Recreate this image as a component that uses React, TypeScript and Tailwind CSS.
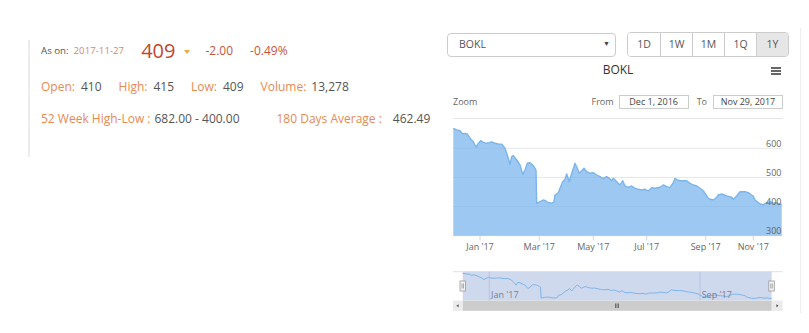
import React from "react";

// price series traced from the chart, in 3x crop units (origin 440,110)
const trace: [number, number][] = [
  [40, 55], [50, 60], [60, 62], [68, 72], [75, 70], [82, 72], [90, 85], [100, 95], [108, 112],
  [115, 100], [122, 92], [130, 97], [140, 100], [148, 98], [155, 96], [165, 100], [175, 102],
  [185, 103], [195, 115], [200, 130], [205, 145], [210, 163], [215, 140], [220, 137], [230, 150],
  [240, 165], [248, 193], [255, 180], [262, 160], [270, 158], [278, 165], [285, 175], [288, 180],
  [290, 280], [300, 275], [310, 270], [318, 273], [325, 278], [335, 280], [342, 275], [345, 255],
  [355, 248], [360, 235], [368, 215], [375, 208], [380, 192], [388, 215], [395, 190], [405, 160],
  [412, 175], [418, 190], [425, 182], [432, 175], [440, 185], [450, 190], [460, 188], [470, 195],
  [480, 200], [490, 206], [500, 200], [508, 205], [515, 212], [520, 205], [530, 215], [540, 225],
  [548, 212], [555, 228], [565, 232], [575, 228], [585, 235], [595, 238], [605, 240], [615, 238],
  [625, 243], [635, 233], [645, 235], [660, 232], [670, 225], [680, 230], [690, 233], [700, 218],
  [705, 205], [712, 210], [720, 212], [730, 212], [740, 212], [750, 220], [760, 225], [770, 228],
  [780, 235], [790, 242], [800, 258], [805, 265], [812, 268], [820, 270], [830, 262], [835, 255],
  [845, 252], [860, 258], [875, 262], [880, 268], [890, 258], [900, 245], [915, 245], [925, 248],
  [935, 255], [940, 258], [945, 270], [952, 275], [960, 282], [970, 284], [980, 278], [990, 275],
  [1000, 280], [1010, 278], [1020, 283], [1025, 283],
];

const mainPts = trace.map(([x, y]) => [440 + x / 3, 110 + y / 3] as const);
const navPts = trace.map(([x, y]) => [
  440 + (68 + ((x - 40) * 927) / 985) / 3,
  250 + (70 + (y - 55) * 0.33) / 3,
] as const);

const toLine = (pts: readonly (readonly [number, number])[]) =>
  pts.map(([x, y], i) => `${i ? "L" : "M"}${x.toFixed(1)},${y.toFixed(1)}`).join(" ");

const PLOT_BOTTOM = 235.7;
const areaPath = `${toLine(mainPts)} L${mainPts[mainPts.length - 1][0].toFixed(1)},${PLOT_BOTTOM} L${mainPts[0][0].toFixed(1)},${PLOT_BOTTOM} Z`;

const grid = [
  { v: "600", y: 148.3 },
  { v: "500", y: 177.4 },
  { v: "400", y: 206.6 },
  { v: "300", y: PLOT_BOTTOM },
];

const ticks = [
  { l: "Jan '17", x: 480 },
  { l: "Mar '17", x: 539.3 },
  { l: "May '17", x: 593.3 },
  { l: "Jul '17", x: 646.7 },
  { l: "Sep '17", x: 705.7 },
  { l: "Nov '17", x: 753.3 },
];

const ranges = ["1D", "1W", "1M", "1Q", "1Y"];

function Stat({ label, value, last }: { label: string; value: string; last?: boolean }) {
  return (
    <div className={`flex items-center ${last ? "" : "mr-[17px]"}`}>
      <span className="text-[#e88a52]">{label}</span>
      <span className="ml-[6px] text-[#555555]">{value}</span>
    </div>
  );
}

function Handle({ x }: { x: number }) {
  return (
    <g>
      <rect x={x} y={281} width={5.5} height={10} fill="#f2f2f2" stroke="#999999" strokeWidth={0.8} />
      <line x1={x + 2} y1={283.5} x2={x + 2} y2={288.5} stroke="#777777" strokeWidth={0.6} />
      <line x1={x + 3.5} y1={283.5} x2={x + 3.5} y2={288.5} stroke="#777777" strokeWidth={0.6} />
    </g>
  );
}

function PriceChart() {
  return (
    <svg width={330} height={192} viewBox="453 119 330 192" className="block">
      {/* grid */}
      {grid.map((g) => (
        <line key={g.v} x1={453} y1={g.y} x2={782.5} y2={g.y} stroke="#e6e6e6" strokeWidth={1} />
      ))}
      <path d={areaPath} fill="#7cb5ec" fillOpacity={0.75} />
      <path d={toLine(mainPts)} fill="none" stroke="#7cb5ec" strokeWidth={1.4} strokeLinejoin="round" />
      {grid.map((g) => (
        <text
          key={g.v}
          x={781.5}
          y={g.y - 1.6}
          textAnchor="end"
          fontSize={9}
          fill="#666666"
          fontFamily="'Open Sans', sans-serif"
        >
          {g.v}
        </text>
      ))}
      {ticks.map((t) => (
        <g key={t.l}>
          <line x1={t.x} y1={PLOT_BOTTOM} x2={t.x} y2={240.5} stroke="#ccd6eb" strokeWidth={1} />
          <text
            x={t.x}
            y={249.5}
            textAnchor="middle"
            fontSize={9}
            fill="#666666"
            fontFamily="'Open Sans', sans-serif"
          >
            {t.l}
          </text>
        </g>
      ))}

      {/* navigator */}
      <line x1={453} y1={271.7} x2={782.5} y2={271.7} stroke="#e0e0e0" strokeWidth={1} />
      <rect x={462.7} y={271.7} width={309} height={29} fill="#cfd9ee" />
      <line x1={489.3} y1={271.7} x2={489.3} y2={300.7} stroke="#b3bfdb" strokeWidth={0.8} />
      <line x1={700} y1={271.7} x2={700} y2={300.7} stroke="#b3bfdb" strokeWidth={0.8} />
      <path d={toLine(navPts)} fill="none" stroke="#7cb5ec" strokeWidth={1} />
      <text x={491} y={297.5} fontSize={9} fill="#7a7f8c" fontFamily="'Open Sans', sans-serif">
        Jan '17
      </text>
      <text x={701.7} y={297.5} fontSize={9} fill="#7a7f8c" fontFamily="'Open Sans', sans-serif">
        Sep '17
      </text>
      <Handle x={460} />
      <Handle x={768.8} />

      {/* scrollbar */}
      <rect x={453} y={300.7} width={329.5} height={10} fill="#f2f2f2" />
      <rect x={462.7} y={300.7} width={309} height={10} fill="#cccccc" />
      <rect x={453} y={300.7} width={9.7} height={10} fill="#ebebeb" />
      <rect x={771.7} y={300.7} width={10.8} height={10} fill="#ebebeb" />
      <path d="M456.3,305.7 L458.6,304.2 L458.6,307.2 Z" fill="#555555" />
      <path d="M778.6,305.7 L776.3,304.2 L776.3,307.2 Z" fill="#555555" />
      <line x1={615.5} y1={303.5} x2={615.5} y2={308} stroke="#444444" strokeWidth={0.7} />
      <line x1={617} y1={303.5} x2={617} y2={308} stroke="#444444" strokeWidth={0.7} />
      <line x1={618.5} y1={303.5} x2={618.5} y2={308} stroke="#444444" strokeWidth={0.7} />
    </svg>
  );
}

export default function App() {
  return (
    <div className="flex w-[809px] h-[333px] bg-white font-['Open_Sans',sans-serif] overflow-hidden">
      {/* quote summary */}
      <div className="w-[447px] pl-[28px] pt-[25px] shrink-0">
        <div className="h-[117px] border-l-2 border-[#ececec] pl-[11px]">
          <div className="mt-[15px] h-[22px] flex items-center whitespace-nowrap">
            <span className="text-[9.7px] text-[#555555]">As on:</span>
            <span className="ml-[5px] text-[9.7px] text-[#d98a68]">2017-11-27</span>
            <span className="ml-[17px] text-[20px] leading-none text-[#c3472d]">409</span>
            <span className="ml-[9px] mt-[2px] w-0 h-0 border-l-[3.5px] border-r-[3.5px] border-t-[4px] border-l-transparent border-r-transparent border-t-[#f0a848]" />
            <span className="ml-[15px] text-[12px] text-[#c8553a]">-2.00</span>
            <span className="ml-[17px] text-[12px] text-[#c8553a]">-0.49%</span>
          </div>
          <div className="mt-[16px] h-[18px] flex items-center text-[12px] whitespace-nowrap">
            <Stat label="Open:" value="410" />
            <Stat label="High:" value="415" />
            <Stat label="Low:" value="409" />
            <div className="flex items-center">
              <span className="text-[#e88a52]">Volume:</span>
              <span className="ml-[5px] text-[#555555]">13,278</span>
            </div>
          </div>
          <div className="mt-[14px] h-[18px] flex items-center text-[12px] whitespace-nowrap">
            <span className="text-[#e88a52]">52 Week High-Low :</span>
            <span className="ml-[4px] text-[#555555]">682.00 - 400.00</span>
            <span className="ml-[37px] text-[#e88a52]">180 Days Average :</span>
            <span className="ml-[11px] text-[#555555]">462.49</span>
          </div>
        </div>
      </div>

      {/* chart panel */}
      <div className="w-[354px] h-[285px] mt-[28px] border-r border-[#eeeeee] pt-[4px] shrink-0">
        <div className="flex items-center h-[25px]">
          <div className="w-[169px] h-[24px] border border-[#cccccc] rounded-[4px] flex items-center justify-between pl-[11px] pr-[5px] text-[10.5px] text-[#555555]">
            <span>BOKL</span>
            <span className="text-[7px] text-[#444444]">▼</span>
          </div>
          <div className="ml-[11px] flex h-[25px] border border-[#cccccc] rounded-[4px] overflow-hidden">
            {ranges.map((r, i) => (
              <div
                key={r}
                className={`w-[32px] flex items-center justify-center text-[10.5px] text-[#555555] ${
                  i ? "border-l border-[#cccccc]" : ""
                } ${r === "1Y" ? "bg-[#e6e6e6]" : "bg-white"}`}
              >
                {r}
              </div>
            ))}
          </div>
        </div>

        <div className="ml-[6px] w-[330px]">
          <div className="grid grid-cols-[1fr_auto_1fr] items-center h-[23px]">
            <div />
            <div className="text-[12px] text-[#333333] mt-[3px]">BOKL</div>
            <div className="justify-self-end mr-[2px] mt-[5px] flex flex-col gap-[1.5px]">
              <span className="block w-[10px] h-[1.8px] bg-[#666666]" />
              <span className="block w-[10px] h-[1.8px] bg-[#666666]" />
              <span className="block w-[10px] h-[1.8px] bg-[#666666]" />
            </div>
          </div>

          <div className="mt-[15px] pb-[9px] border-b border-[#e6e6e6]">
            <div className="flex items-center h-[14px] text-[9px] text-[#666666]">
              <span>Zoom</span>
              <span className="ml-auto">From</span>
              <div className="ml-[5px] w-[70px] h-[14px] border border-[#cccccc] flex items-center justify-center text-[#444444]">
                Dec 1, 2016
              </div>
              <span className="ml-[8px]">To</span>
              <div className="ml-[6px] w-[70px] h-[14px] border border-[#cccccc] flex items-center justify-center text-[#444444]">
                Nov 29, 2017
              </div>
            </div>
          </div>

          <PriceChart />
        </div>
      </div>
    </div>
  );
}
